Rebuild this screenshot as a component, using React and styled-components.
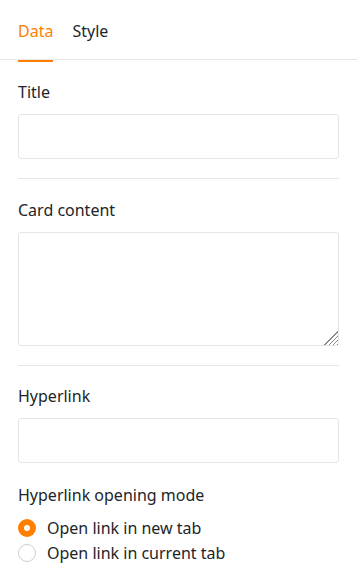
import React, { useState } from "react";
import styled, { createGlobalStyle } from "styled-components";

const Global = createGlobalStyle`
  html, body { margin: 0; padding: 0; background: #fff; }
  body { font-family: "Noto Sans", "Open Sans", sans-serif; color: #212529; }
  * { box-sizing: border-box; }
`;

const Panel = styled.div`
  width: 357px;
  background: #fff;
`;

const TabBar = styled.div`
  display: flex;
  gap: 19px;
  padding: 0 18px;
  height: 60px;
  border-bottom: 1px solid #e6e6e6;
`;

const Tab = styled.button`
  all: unset;
  cursor: pointer;
  display: flex;
  align-items: center;
  height: 100%;
  padding-top: 1px;
  font-size: 16px;
  color: ${(p) => (p.$active ? "#ff8000" : "#212529")};
  border-bottom: 2px solid ${(p) => (p.$active ? "#ff8000" : "transparent")};
`;

const Section = styled.div`
  display: flex;
  flex-direction: column;
  margin: 0 18px;
  padding: ${(p) => p.$top}px 0 19px;
  border-bottom: ${(p) => (p.$divider ? "1px solid #e6e6e6" : "none")};
`;

const Label = styled.div`
  font-size: 16px;
  line-height: 22px;
  margin-bottom: 11px;
`;

const SubLabel = styled(Label)`
  margin-top: 21px;
  margin-bottom: 9px;
`;

const TextInput = styled.input`
  height: 45px;
  width: 100%;
  border: 1px solid #e2e5ea;
  border-radius: 3px;
  padding: 0 10px;
  font: inherit;
  font-size: 14px;
  outline: none;
`;

const TextArea = styled.textarea`
  height: 114px;
  width: 100%;
  border: 1px solid #e2e5ea;
  border-radius: 3px;
  padding: 8px 10px;
  font: inherit;
  font-size: 14px;
  outline: none;
  resize: vertical;
  display: block;
  &::-webkit-resizer {
    background:
      linear-gradient(to bottom right, #fff 50%, transparent 50%),
      repeating-linear-gradient(-45deg, #8a8a8a 0 1px, transparent 1px 3px);
  }
`;

const RadioGroup = styled.div`
  display: flex;
  flex-direction: column;
`;

const RadioRow = styled.label`
  display: flex;
  align-items: center;
  gap: 11px;
  height: 25px;
  font-size: 16px;
  cursor: pointer;
`;

const RadioDot = styled.span`
  width: 18px;
  height: 18px;
  border-radius: 50%;
  flex: none;
  display: flex;
  align-items: center;
  justify-content: center;
  background: ${(p) => (p.$checked ? "#ff8000" : "#fff")};
  border: ${(p) => (p.$checked ? "none" : "1px solid #cfcfcf")};
  &::after {
    content: "";
    display: ${(p) => (p.$checked ? "block" : "none")};
    width: 6px;
    height: 6px;
    border-radius: 50%;
    background: #fff;
  }
`;

export default function App() {
  const [tab, setTab] = useState("data");
  const [mode, setMode] = useState("new");
  return (
    <Panel>
      <Global />
      <TabBar>
        <Tab $active={tab === "data"} onClick={() => setTab("data")}>Data</Tab>
        <Tab $active={tab === "style"} onClick={() => setTab("style")}>Style</Tab>
      </TabBar>
      <Section $divider $top={21}>
        <Label>Title</Label>
        <TextInput />
      </Section>
      <Section $divider $top={20}>
        <Label>Card content</Label>
        <TextArea />
      </Section>
      <Section $top={19}>
        <Label>Hyperlink</Label>
        <TextInput />
        <SubLabel>Hyperlink opening mode</SubLabel>
        <RadioGroup>
          <RadioRow onClick={() => setMode("new")}>
            <RadioDot $checked={mode === "new"} />
            Open link in new tab
          </RadioRow>
          <RadioRow onClick={() => setMode("current")}>
            <RadioDot $checked={mode === "current"} />
            Open link in current tab
          </RadioRow>
        </RadioGroup>
      </Section>
    </Panel>
  );
}
